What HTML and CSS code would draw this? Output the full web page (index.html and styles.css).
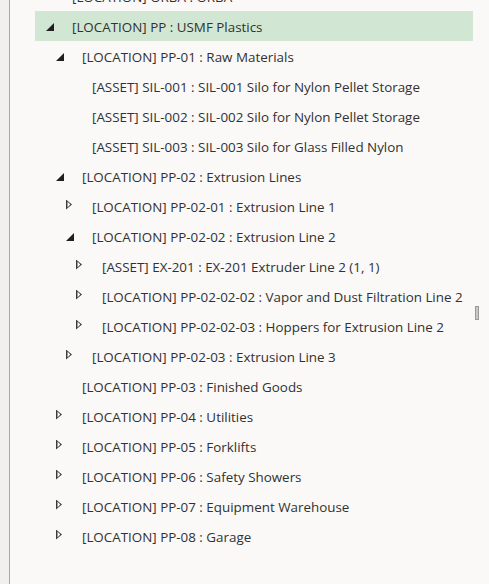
FILE: index.html
```html
<!DOCTYPE html>
<html>
<head>
<meta charset="utf-8">
<link rel="stylesheet" href="styles.css">
</head>
<body>
<div class="page">
  <div class="gutter"></div>
  <div class="panel">
    <ul class="tree">
      <li class="row l1"><span class="tog closed"></span><span class="label">[LOCATION] ORBA : ORBA</span></li>
      <li class="row l1 selected"><span class="tog open"></span><span class="label">[LOCATION] PP : USMF Plastics</span></li>
      <li class="row l2"><span class="tog open"></span><span class="label">[LOCATION] PP-01 : Raw Materials</span></li>
      <li class="row l3"><span class="tog"></span><span class="label">[ASSET] SIL-001 : SIL-001 Silo for Nylon Pellet Storage</span></li>
      <li class="row l3"><span class="tog"></span><span class="label">[ASSET] SIL-002 : SIL-002 Silo for Nylon Pellet Storage</span></li>
      <li class="row l3"><span class="tog"></span><span class="label">[ASSET] SIL-003 : SIL-003 Silo for Glass Filled Nylon</span></li>
      <li class="row l2"><span class="tog open"></span><span class="label">[LOCATION] PP-02 : Extrusion Lines</span></li>
      <li class="row l3"><span class="tog closed"></span><span class="label">[LOCATION] PP-02-01 : Extrusion Line 1</span></li>
      <li class="row l3"><span class="tog open"></span><span class="label">[LOCATION] PP-02-02 : Extrusion Line 2</span></li>
      <li class="row l4"><span class="tog closed"></span><span class="label">[ASSET] EX-201 : EX-201 Extruder Line 2 (1, 1)</span></li>
      <li class="row l4"><span class="tog closed"></span><span class="label">[LOCATION] PP-02-02-02 : Vapor and Dust Filtration Line 2</span></li>
      <li class="row l4"><span class="tog closed"></span><span class="label">[LOCATION] PP-02-02-03 : Hoppers for Extrusion Line 2</span></li>
      <li class="row l3"><span class="tog closed"></span><span class="label">[LOCATION] PP-02-03 : Extrusion Line 3</span></li>
      <li class="row l2"><span class="tog"></span><span class="label">[LOCATION] PP-03 : Finished Goods</span></li>
      <li class="row l2"><span class="tog closed"></span><span class="label">[LOCATION] PP-04 : Utilities</span></li>
      <li class="row l2"><span class="tog closed"></span><span class="label">[LOCATION] PP-05 : Forklifts</span></li>
      <li class="row l2"><span class="tog closed"></span><span class="label">[LOCATION] PP-06 : Safety Showers</span></li>
      <li class="row l2"><span class="tog closed"></span><span class="label">[LOCATION] PP-07 : Equipment Warehouse</span></li>
      <li class="row l2"><span class="tog closed"></span><span class="label">[LOCATION] PP-08 : Garage</span></li>
    </ul>
    <div class="thumb"></div>
  </div>
</div>
</body>
</html>
```
FILE: styles.css
```css
html, body {
  margin: 0;
  padding: 0;
  background: #faf9f8;
}
.page {
  display: flex;
  width: 489px;
  height: 584px;
  overflow: hidden;
  font-family: "Open Sans", "Noto Sans", sans-serif;
  font-size: 13.4px;
  color: #323130;
}
.gutter {
  width: 9px;
  flex: none;
  background: #f0f0f0;
  border-right: 1px solid #a8a8a8;
}
.panel {
  position: relative;
  flex: 1;
  padding-left: 25px;
}
.tree {
  list-style: none;
  margin: -19px 0 0 0;
  padding: 0;
  width: 438px;
}
.row {
  display: flex;
  align-items: center;
  height: 30px;
  padding-left: 11px;
  white-space: nowrap;
}
.row.selected {
  background: #d1e7d4;
}
.l2 { padding-left: 21px; }
.l3 { padding-left: 31px; }
.l4 { padding-left: 41px; }
.tog {
  width: 26px;
  flex: none;
  height: 30px;
  display: flex;
  align-items: center;
}
.tog.open::before {
  content: "";
  display: block;
  width: 0;
  height: 0;
  margin-top: 1px;
  border-left: 8px solid transparent;
  border-bottom: 8px solid #201f1e;
}
.tog.closed::before {
  content: "";
  display: block;
  width: 6px;
  height: 10px;
  margin-top: -3px;
  background: #3b3a39;
  clip-path: polygon(0 0, 100% 50%, 0 100%, 0 0, 1.5px 20%, 1.5px 80%, 72% 50%, 1.5px 20%);
}
.label {
  line-height: 28px;
  padding-top: 2px;
}
.thumb {
  position: absolute;
  left: 465px;
  top: 306px;
  width: 2px;
  height: 12px;
  background: #c8c8c8;
  border: 1px solid #9a9a9a;
}
```
